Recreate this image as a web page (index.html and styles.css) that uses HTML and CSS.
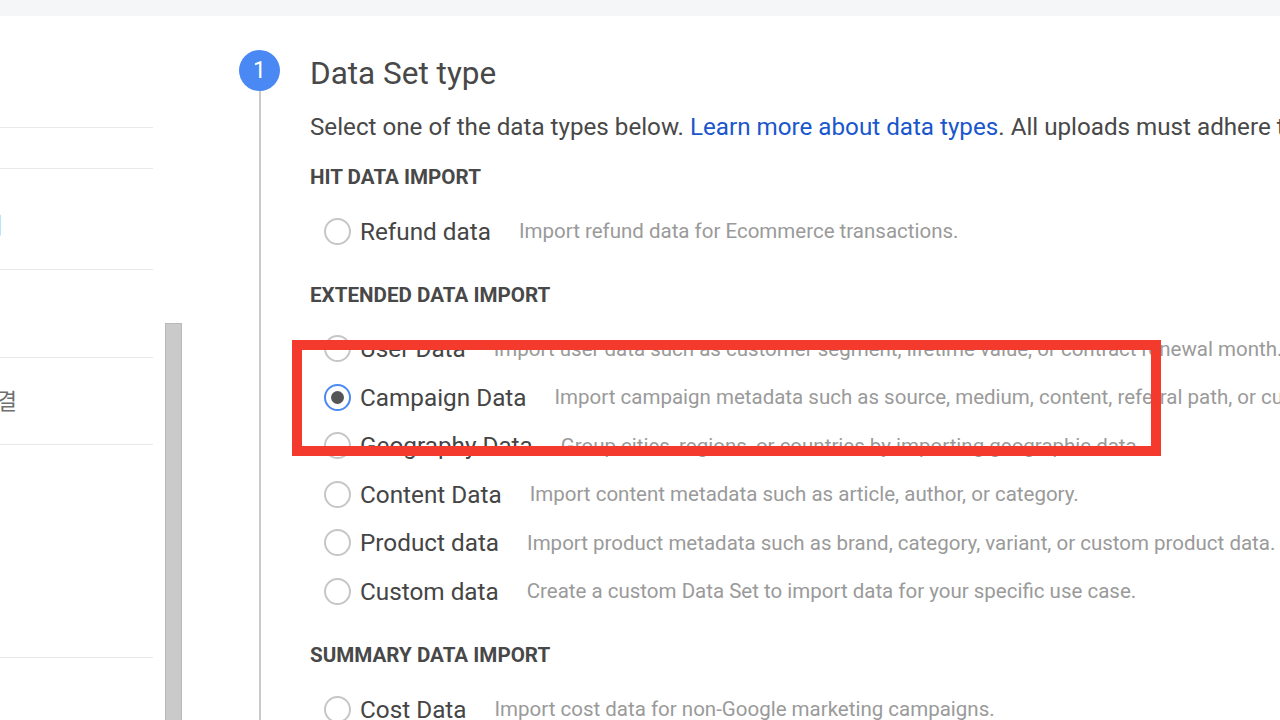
FILE: index.html
```html
<!DOCTYPE html>
<html lang="en">
<head>
<meta charset="utf-8">
<title>Data Set type</title>
<link rel="stylesheet" href="styles.css">
</head>
<body>
<div class="topbar"></div>
<div class="main">
  <nav class="sidebar">
    <div class="side-item side-first"></div>
    <div class="side-item side-h41"></div>
    <div class="side-item side-h101 side-text-a"><span>데이터 세트 관리</span></div>
    <div class="side-item side-h88"></div>
    <div class="side-item side-h87 side-text-b"><span>계정 연결</span></div>
    <div class="side-item side-h213"></div>
    <div class="side-item side-last"></div>
  </nav>
  <div class="scroll-col"><div class="scroll-thumb"></div></div>
  <div class="step">
    <div class="rail">
      <div class="step-num">1</div>
      <div class="rail-line"></div>
    </div>
    <div class="step-body">
      <h1 class="title">Data Set type</h1>
      <p class="intro">Select one of the data types below. <a href="#" class="link">Learn more about data types</a>. All uploads must adhere to the data import policy.</p>

      <h2 class="group">HIT DATA IMPORT</h2>
      <div class="options">
        <label class="opt"><span class="radio"></span><span class="opt-name">Refund data</span><span class="opt-desc">Import refund data for Ecommerce transactions.</span></label>
      </div>

      <h2 class="group">EXTENDED DATA IMPORT</h2>
      <div class="options">
        <label class="opt"><span class="radio"></span><span class="opt-name">User Data</span><span class="opt-desc">Import user data such as customer segment, lifetime value, or contract renewal month.</span></label>
        <label class="opt"><span class="radio radio-on"></span><span class="opt-name">Campaign Data</span><span class="opt-desc">Import campaign metadata such as source, medium, content, referral path, or custom dimensions.</span></label>
        <label class="opt"><span class="radio"></span><span class="opt-name">Geography Data</span><span class="opt-desc">Group cities, regions, or countries by importing geographic data.</span></label>
        <label class="opt"><span class="radio"></span><span class="opt-name">Content Data</span><span class="opt-desc">Import content metadata such as article, author, or category.</span></label>
        <label class="opt"><span class="radio"></span><span class="opt-name">Product data</span><span class="opt-desc">Import product metadata such as brand, category, variant, or custom product data.</span></label>
        <label class="opt"><span class="radio"></span><span class="opt-name">Custom data</span><span class="opt-desc">Create a custom Data Set to import data for your specific use case.</span></label>
      </div>

      <h2 class="group">SUMMARY DATA IMPORT</h2>
      <div class="options">
        <label class="opt"><span class="radio"></span><span class="opt-name">Cost Data</span><span class="opt-desc">Import cost data for non-Google marketing campaigns.</span></label>
      </div>
    </div>
  </div>
</div>
<div class="highlight"></div>
</body>
</html>
```

FILE: styles.css
```css
html, body {
  margin: 0;
  padding: 0;
  width: 1280px;
  height: 720px;
  overflow: hidden;
  background: #ffffff;
  font-family: Roboto, "Noto Sans", "Noto Sans CJK KR", sans-serif;
  color: #444444;
  white-space: nowrap;
}

.topbar {
  height: 16px;
  background: #f5f6f8;
}

.main {
  display: flex;
  height: 704px;
}

/* sidebar (scrolled off to the left) */
.sidebar {
  width: 153px;
  flex: none;
  overflow: hidden;
  display: flex;
  flex-direction: column;
}
.side-item {
  box-sizing: border-box;
  border-top: 1px solid #e8e8e8;
  display: flex;
  align-items: center;
  justify-content: flex-end;
  font-family: "Noto Sans CJK KR", "Noto Sans", sans-serif;
  font-size: 22px;
  color: #707070;
  overflow: hidden;
  flex: none;
}
.side-first { height: 111px; border-top: none; }
.side-h41 { height: 41px; }
.side-h101 { height: 101px; }
.side-h88 { height: 88px; }
.side-h87 { height: 87px; }
.side-h213 { height: 213px; }
.side-last { flex: 1; }
.side-text-a { padding-right: 150px; padding-top: 8px; color: #808080; }
.side-text-b { padding-right: 136px; padding-bottom: 4px; }

/* scrollbar */
.scroll-col {
  width: 17px;
  margin-left: 12px;
  flex: none;
  padding-top: 307px;
  box-sizing: border-box;
}
.scroll-thumb {
  height: 100%;
  background: #cacaca;
  border: 1px solid #b9b9b9;
  border-bottom: none;
  box-sizing: border-box;
}

/* stepper */
.step {
  display: flex;
  margin-left: 57px;
  gap: 30px;
}
.rail {
  width: 41px;
  flex: none;
  display: flex;
  flex-direction: column;
  align-items: center;
  padding-top: 34px;
}
.step-num {
  width: 41px;
  height: 41px;
  border-radius: 50%;
  background: #4a89f3;
  color: #ffffff;
  font-size: 23px;
  line-height: 41px;
  text-align: center;
  flex: none;
}
.rail-line {
  width: 2px;
  flex: 1;
  background: #c9c9c9;
}

.step-body {
  padding-top: 38px;
}
.title {
  margin: 0;
  font-size: 31.5px;
  font-weight: 400;
  line-height: 40px;
  color: #484848;
}
.intro {
  margin: 16px 0 0;
  font-size: 24.2px;
  line-height: 34px;
  color: #484848;
}
.link {
  color: #1a56cc;
  text-decoration: none;
}
.group {
  margin: 24.5px 0 0;
  font-size: 20.6px;
  font-weight: 700;
  line-height: 30px;
  color: #484848;
}
.intro + .group {
  margin-top: 18px;
}
.options {
  margin-top: 14.75px;
  display: flex;
  flex-direction: column;
}
.opt {
  height: 48.5px;
  display: flex;
  align-items: center;
}
.radio {
  width: 27px;
  height: 27px;
  box-sizing: border-box;
  border: 2px solid #c6c6c6;
  border-radius: 50%;
  margin-left: 14px;
  flex: none;
  display: flex;
  align-items: center;
  justify-content: center;
}
.radio-on {
  border-color: #4a89f3;
}
.radio-on::after {
  content: "";
  width: 13px;
  height: 13px;
  border-radius: 50%;
  background: #555555;
}
.opt-name {
  margin-left: 9px;
  font-size: 24.3px;
  color: #454545;
}
.opt-desc {
  margin-left: 28px;
  font-size: 20.5px;
  color: #9a9a9a;
}

/* annotation overlay */
.highlight {
  position: absolute;
  left: 292px;
  top: 340px;
  width: 869px;
  height: 116px;
  box-sizing: border-box;
  border: 10px solid #f33a2c;
}
```
